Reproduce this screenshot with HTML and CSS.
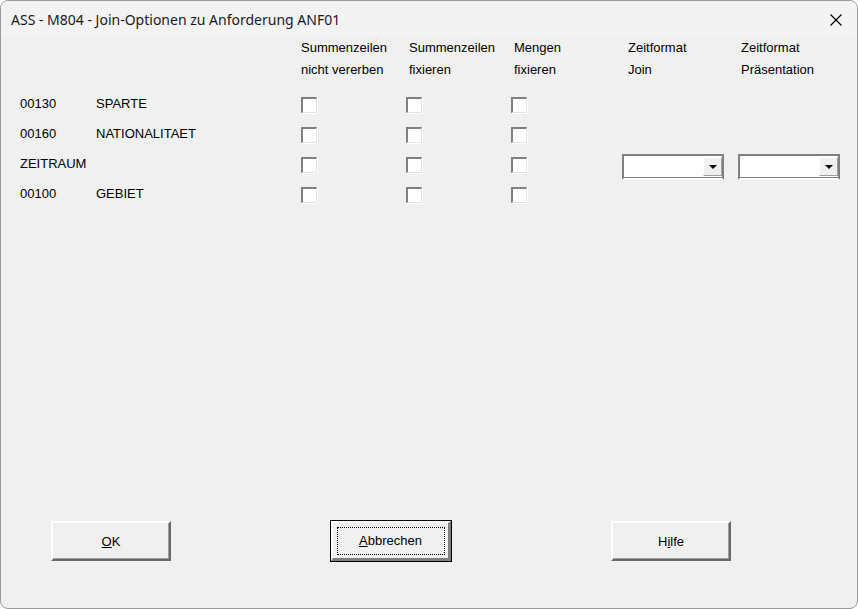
FILE: index.html
```html
<!DOCTYPE html>
<html>
<head>
<meta charset="utf-8">
<link rel="stylesheet" href="styles.css">
</head>
<body>
<div class="window">
  <div class="titlebar">
    <span class="title">ASS - M804 - Join-Optionen zu Anforderung ANF01</span>
    <span class="close">
      <svg width="12" height="12" viewBox="0 0 12 12"><path d="M0.5 0.5 L11.5 11.5 M11.5 0.5 L0.5 11.5" stroke="#000" stroke-width="1.1" fill="none"/></svg>
    </span>
  </div>
  <div class="content">
    <div class="grid">
      <div class="hd c3">Summenzeilen<br>nicht vererben</div>
      <div class="hd c4">Summenzeilen<br>fixieren</div>
      <div class="hd c5">Mengen<br>fixieren</div>
      <div class="hd c6">Zeitformat<br>Join</div>
      <div class="hd c7">Zeitformat<br>Präsentation</div>

      <div class="cell code">00130</div><div class="cell name">SPARTE</div>
      <div class="cell cbx"><span class="check"></span></div>
      <div class="cell cbx"><span class="check"></span></div>
      <div class="cell cbx"><span class="check"></span></div>
      <div class="cell"></div><div class="cell"></div>

      <div class="cell code">00160</div><div class="cell name">NATIONALITAET</div>
      <div class="cell cbx"><span class="check"></span></div>
      <div class="cell cbx"><span class="check"></span></div>
      <div class="cell cbx"><span class="check"></span></div>
      <div class="cell"></div><div class="cell"></div>

      <div class="cell code">ZEITRAUM</div><div class="cell name"></div>
      <div class="cell cbx"><span class="check"></span></div>
      <div class="cell cbx"><span class="check"></span></div>
      <div class="cell cbx"><span class="check"></span></div>
      <div class="cell cmbcell"><div class="combo"><div class="combo-field"></div><div class="combo-btn"><svg width="8" height="4" viewBox="0 0 8 4"><path d="M0 0 H8 L4 4 Z" fill="#000"/></svg></div></div></div>
      <div class="cell cmbcell"><div class="combo"><div class="combo-field"></div><div class="combo-btn"><svg width="8" height="4" viewBox="0 0 8 4"><path d="M0 0 H8 L4 4 Z" fill="#000"/></svg></div></div></div>

      <div class="cell code">00100</div><div class="cell name">GEBIET</div>
      <div class="cell cbx"><span class="check"></span></div>
      <div class="cell cbx"><span class="check"></span></div>
      <div class="cell cbx"><span class="check"></span></div>
      <div class="cell"></div><div class="cell"></div>
    </div>

    <div class="footer">
      <button class="btn"><span><u>O</u>K</span></button>
      <button class="btn default"><span class="focus"><u>A</u>bbrechen</span></button>
      <button class="btn"><span>H<u>i</u>lfe</span></button>
    </div>
  </div>
</div>
</body>
</html>
```

FILE: styles.css
```css
html, body {
  margin: 0;
  padding: 0;
  background: #ffffff;
}
body {
  width: 858px;
  height: 609px;
  overflow: hidden;
}
.window {
  box-sizing: border-box;
  width: 858px;
  height: 609px;
  border: 1px solid #9a9a9a;
  border-radius: 8px;
  background: #f0f0f0;
  display: flex;
  flex-direction: column;
  overflow: hidden;
  font-family: "Liberation Sans", Arial, sans-serif;
  color: #000;
}
.titlebar {
  height: 37px;
  background: #f3f3f3;
  display: flex;
  align-items: center;
  justify-content: space-between;
  padding: 0 15px 0 10px;
  flex-shrink: 0;
}
.title {
  font-family: "Noto Sans", "Open Sans", sans-serif;
  font-size: 14px;
  color: #1a1a1a;
  padding-bottom: 1px;
}
.close {
  display: flex;
  align-items: center;
  margin-top: 1px;
}
.content {
  flex: 1;
  display: flex;
  flex-direction: column;
  font-family: "Liberation Sans", Arial, sans-serif;
  font-size: 13px;
}
.grid {
  display: grid;
  grid-template-columns: 76px 205px 105px 105px 111px 116px 102px;
  grid-template-rows: 44px repeat(4, 30px);
  padding-left: 19px;
}
.grid > .hd {
  line-height: 22px;
  margin-top: -1px;
  white-space: nowrap;
}
.hd.c3 { grid-column: 3; padding-left: 0; }
.hd.c4 { grid-column: 4; padding-left: 3px; }
.hd.c5 { grid-column: 5; padding-left: 3px; }
.hd.c6 { grid-column: 6; padding-left: 6px; }
.hd.c7 { grid-column: 7; padding-left: 3px; }
.grid > .cell {
  display: flex;
  align-items: center;
  margin-top: 6px;
  margin-bottom: -6px;
}
.grid > .code { grid-column: 1; }
.grid > .name { grid-column: 2; }
.cbx {
  align-items: flex-start !important;
  padding-top: 9px;
}
.check {
  box-sizing: border-box;
  display: block;
  width: 16px;
  height: 16px;
  background: #fff;
  border-top: 2px solid #808080;
  border-left: 2px solid #808080;
  border-right: 1px solid #e3e3e3;
  border-bottom: 1px solid #e3e3e3;
  box-shadow: 1px 1px 0 #ffffff;
}
.cmbcell {
  align-items: flex-start !important;
  padding-top: 6px;
}
.combo {
  box-sizing: border-box;
  width: 102px;
  height: 26px;
  display: flex;
  background: #fff;
  border-top: 2px solid #808080;
  border-left: 2px solid #808080;
  border-right: 2px solid #808080;
  border-bottom: 2px solid #ffffff;
  box-shadow: inset 0 -1px 0 #808080;
  padding: 1px 0 2px 0;
}
.combo-field {
  flex: 1;
}
.combo-btn {
  width: 19px;
  height: 19px;
  background: #f0f0f0;
  border-left: 1px solid #ffffff;
  border-top: 1px solid #ffffff;
  border-right: 1px solid #a0a0a0;
  border-bottom: 1px solid #a0a0a0;
  box-sizing: border-box;
  display: flex;
  align-items: center;
  justify-content: center;
}
.footer {
  margin-top: auto;
  display: flex;
  gap: 160px;
  padding-left: 50px;
  padding-bottom: 47px;
}
.btn {
  box-sizing: border-box;
  width: 120px;
  height: 40px;
  background: #f0f0f0;
  border: none;
  border-top: 2px solid #ffffff;
  border-left: 2px solid #ffffff;
  border-right: 2px solid #696969;
  border-bottom: 2px solid #696969;
  box-shadow: inset -1px -1px 0 #a0a0a0;
  font-family: "Liberation Sans", Arial, sans-serif;
  font-size: 13px;
  color: #000;
  padding: 0;
  display: flex;
  align-items: center;
  justify-content: center;
}
.btn.default {
  outline: 1px solid #000;
  outline-offset: 0;
  border-top: 2px solid #fff;
  border-left: 2px solid #fff;
  border-right: 3px solid #808080;
  border-bottom: 3px solid #808080;
  box-shadow: none;
}
.btn .focus {
  box-sizing: border-box;
  width: 108px;
  height: 28px;
  border: 1px dotted #000;
  display: flex;
  align-items: center;
  justify-content: center;
}
```
